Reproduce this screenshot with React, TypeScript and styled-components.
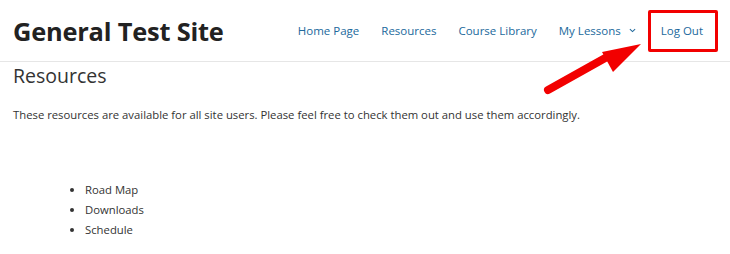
import React from 'react';
import styled, { createGlobalStyle } from 'styled-components';

const navItems = ['Home Page', 'Resources', 'Course Library'];
const resources = ['Road Map', 'Downloads', 'Schedule'];

export default () => (
  <>
    <GlobalStyle />
    <Page>
      <Header>
        <SiteTitle>General Test Site</SiteTitle>
        <Nav>
          {navItems.map(item => (
            <NavLink key={item}>{item}</NavLink>
          ))}
          <NavLink>
            My Lessons
            <Chevron viewBox="0 0 8 5">
              <path d="M1 1 L4 3.8 L7 1" fill="none" stroke="currentColor" strokeWidth="1.2" />
            </Chevron>
          </NavLink>
          <Highlight>
            <NavLink>Log Out</NavLink>
          </Highlight>
        </Nav>
      </Header>
      <Content>
        <PageTitle>Resources</PageTitle>
        <Intro>These resources are available for all site users. Please feel free to check them out and use them accordingly.</Intro>
        <List>
          {resources.map(item => (
            <li key={item}>{item}</li>
          ))}
        </List>
      </Content>
      <Arrow viewBox="0 0 120 70">
        <line x1="13" y1="60" x2="72" y2="27" stroke={color.red} strokeWidth="8" strokeLinecap="round" />
        <polygon points="106,14 67,22 78,42" fill={color.red} />
      </Arrow>
    </Page>
  </>
);

const color = {
  text: '#333',
  title: '#222',
  link: '#21699c',
  border: '#e6e6e6',
  red: '#f20000',
};

const GlobalStyle = createGlobalStyle`
  body {
    margin: 0;
    background: #fff;
    font-family: 'Open Sans', 'Noto Sans', sans-serif;
    color: ${color.text};
  }
`;

const Page = styled.div`
  position: relative;
  width: 730px;
  height: 254px;
  overflow: hidden;
`;

const Header = styled.header`
  display: flex;
  align-items: center;
  justify-content: space-between;
  height: 61px;
  padding: 0 12px 0 13px;
  border-bottom: 1px solid ${color.border};
`;

const SiteTitle = styled.div`
  font-size: 25.4px;
  font-weight: 700;
  color: ${color.title};
  letter-spacing: -0.2px;
`;

const Nav = styled.nav`
  display: flex;
  align-items: center;
  gap: 22px;
`;

const NavLink = styled.a`
  display: flex;
  align-items: center;
  gap: 8px;
  font-size: 11.5px;
  color: ${color.link};
  cursor: pointer;
`;

const Chevron = styled.svg`
  width: 7px;
  height: 5px;
`;

const Highlight = styled.div`
  display: flex;
  align-items: center;
  height: 36px;
  margin-left: -10px;
  padding: 0 12px 0 10px;
  border: 3px solid ${color.red};
  border-radius: 2px;
`;

const Content = styled.main`
  padding: 0 13px;
`;

const PageTitle = styled.h1`
  margin: 0;
  font-size: 19.5px;
  font-weight: 400;
  color: ${color.text};
`;

const Intro = styled.p`
  margin: 18px 0 0;
  font-size: 11.3px;
`;

const List = styled.ul`
  margin: 58px 0 0;
  padding-left: 72px;
  font-size: 11.3px;
  line-height: 20px;
`;

const Arrow = styled.svg`
  position: absolute;
  left: 535px;
  top: 30px;
  width: 120px;
  height: 70px;
`;
